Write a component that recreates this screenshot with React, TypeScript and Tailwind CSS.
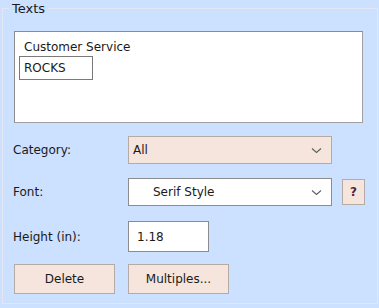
const Chevron = () => (
  <svg width="11" height="7" viewBox="0 0 11 7" className="text-[#606060]">
    <path d="M1 1.5 L5.5 5.5 L10 1.5" fill="none" stroke="currentColor" strokeWidth="1.1" />
  </svg>
);

const App = () => {
  return (
    <div className="w-[379px] h-[308px] bg-[#cce0ff] pt-0 text-[12px] text-[#1a1a1a] font-['DejaVu_Sans',sans-serif]">
      <fieldset className="ml-[2px] mr-[1px] h-[304px] border border-[#e4e6f2] pl-[11px] pr-[12px] pt-[14px]">
        <legend className="-ml-[5px] px-[3px] leading-[17px] text-[13px]">Texts</legend>

        {/* text list */}
        <div className="w-[349px] h-[92px] bg-white border border-[#a0a0a0] border-t-[#8c8c8c] border-l-[#8c8c8c] pl-[9px] pt-[7px]">
          <div className="leading-[16px]">Customer Service</div>
          <div className="-ml-[5px] mt-[1px] w-[74px] h-[24px] border border-[#7a7a7a] pl-[4px] flex items-center">
            ROCKS
          </div>
        </div>

        {/* category */}
        <div className="flex items-center mt-[13px] -ml-[1px]">
          <span className="w-[115px]">Category:</span>
          <div className="w-[204px] h-[28px] bg-[#f6e5dd] border border-[#b4aaa6] flex items-center justify-between pl-[4px] pr-[9px]">
            <span>All</span>
            <Chevron />
          </div>
        </div>

        {/* font */}
        <div className="flex items-center mt-[14px] -ml-[1px]">
          <span className="w-[115px]">Font:</span>
          <div className="w-[204px] h-[28px] bg-white border border-[#8c8c8c] flex items-center justify-between pl-[24px] pr-[9px]">
            <span>Serif Style</span>
            <Chevron />
          </div>
          <div className="ml-[10px] w-[23px] h-[26px] bg-[#f6e5dd] border border-[#b4aaa6] flex items-center justify-center font-bold text-[#5a1e3c]">
            ?
          </div>
        </div>

        {/* height */}
        <div className="flex items-center mt-[15px] -ml-[1px]">
          <span className="w-[115px]">Height (in):</span>
          <div className="w-[81px] h-[31px] bg-white border border-[#8c8c8c] flex items-center pl-[8px]">
            1.18
          </div>
        </div>

        {/* buttons */}
        <div className="flex items-center mt-[12px] gap-[13px]">
          <button type="button" className="w-[101px] h-[30px] bg-[#f6e5dd] border border-[#b4aaa6]">
            Delete
          </button>
          <button type="button" className="w-[101px] h-[30px] bg-[#f6e5dd] border border-[#b4aaa6]">
            Multiples...
          </button>
        </div>
      </fieldset>
    </div>
  );
};

export default App;
